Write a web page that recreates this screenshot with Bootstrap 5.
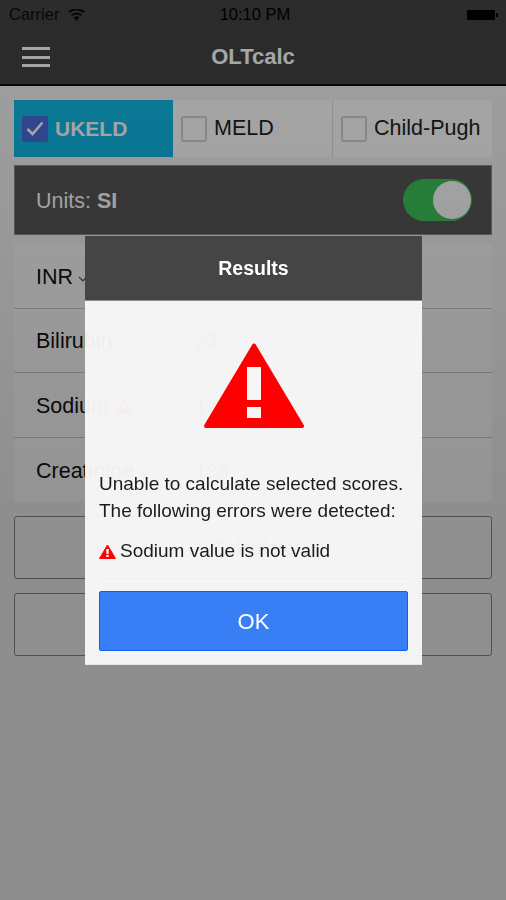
<!DOCTYPE html>
<html lang="en">
<head>
    <meta charset="UTF-8">
    <meta name="viewport" content="width=device-width, initial-scale=1.0">
    <title>OLTcalc</title>
    <link rel="stylesheet" href="https://cdn.jsdelivr.net/npm/bootstrap@5.3.0/dist/css/bootstrap.min.css">
    <style>
        html, body {
            height: 100%;
        }
        body {
            font-family: "Liberation Sans", Arial, sans-serif;
            background: #f4f4f4;
            color: #111;
            overflow: hidden;
        }
        .app-header {
            height: 86px;
            background: #434343;
            border-bottom: 2px solid #0c0c0c;
            color: #fff;
        }
        .status-line {
            height: 29px;
            padding: 0 9px 0 9px;
            color: #0c0c0c;
            font-size: 16.500px;
        }
        .status-gap {
            gap: 9px;
        }
        .status-time {
            margin-left: 2px;
            font-size: 16.500px;
            color: #000;
        }
        .battery {
            width: 28px;
            height: 10px;
            margin-right: 2px;
            background: #000;
            border-radius: 1px;
            position: relative;
        }
        .battery::after {
            content: "";
            position: absolute;
            left: 29px;
            top: 3px;
            width: 2px;
            height: 4px;
            background: #000;
        }
        .title-line {
            height: 55px;
            padding-top: 2px;
        }
        .burger {
            left: 22px;
            top: 18px;
            width: 28px;
        }
        .burger span {
            display: block;
            height: 3px;
            margin-bottom: 5.500px;
            background: #fff;
        }
        .app-title {
            font-size: 22px;
            font-weight: 700;
            color: #fff;
            margin: 0;
        }
        .app-main {
            padding: 14px 14px 0;
        }
        .score-tabs {
            height: 57px;
            background: #fff;
        }
        .score-tab {
            flex: 1 1 0;
            gap: 7px;
            padding-left: 8px;
            font-size: 21.500px;
            color: #222;
            border-right: 1px solid #e0e0e0;
        }
        .score-tab:last-child {
            border-right: 0;
        }
        .score-tab.on {
            background: #10b9e6;
            color: #fff;
            font-size: 21px;
            font-weight: 700;
            border-right: 0;
        }
        .tick-box {
            width: 26px;
            height: 26px;
            flex: none;
            border: 2px solid #d4d4d4;
            border-radius: 2px;
        }
        .on .tick-box {
            background: #4a6ee0;
            border-color: #4a6ee0;
        }
        .units-bar {
            height: 70px;
            margin-top: 8px;
            padding: 2px 19px 0 21px;
            background: #575757;
            color: #fff;
            font-size: 21.500px;
            border: 1px solid #8a8a8a;
        }
        .units-switch {
            width: 69px;
            height: 42px;
            margin-top: -2px;
            border-radius: 21px;
            background: #3fc65a;
            padding: 2px 1px;
        }
        .units-switch span {
            display: block;
            width: 38px;
            height: 38px;
            margin-left: auto;
            border-radius: 50%;
            background: #fff;
        }
        .lab-list {
            margin-top: 9px;
            background: #fbfbfb;
        }
        .lab-row {
            height: 64.500px;
            padding: 2px 0 0 22px;
            font-size: 21.500px;
            border-bottom: 1px solid #c8c8c8;
        }
        .lab-row:last-child {
            border-bottom: 0;
        }
        .lab-name {
            width: 159px;
            gap: 5px;
        }
        .lab-value {
            color: #555;
            font-size: 20px;
        }
        .wide-btn {
            height: 63px;
            margin-top: 14px;
            background: #f6f6f6;
            border: 1px solid #888;
            border-radius: 3px;
            font-size: 20px;
            color: #333;
        }
        .dim-layer {
            inset: 0;
            background: linear-gradient(rgba(0, 0, 0, .34), rgba(0, 0, 0, .42) 60%);
        }
        .results-box {
            left: 85px;
            top: 236px;
            width: 337px;
            height: 429px;
            background: rgba(248, 248, 248, .96);
            border-bottom: 1px solid #e4e4e4;
        }
        .results-head {
            height: 65px;
            padding-top: 2px;
            background: #454545;
            border-bottom: 1px solid #8c8c8c;
            color: #fff;
            font-size: 19.500px;
            font-weight: 700;
        }
        .results-body {
            padding: 42px 14px 0;
            font-size: 19px;
            color: #1c1c1c;
        }
        .results-text {
            line-height: 27px;
            margin: 42px 0 0;
        }
        .results-error {
            gap: 4px;
            margin-top: 16px;
            padding-bottom: 16px;
            line-height: 22px;
            border-bottom: 1px solid #efefef;
        }
        .btn-ok {
            width: 100%;
            height: 60px;
            margin-top: 12px;
            background: #387ef5;
            border: 1px solid #0c60ee;
            border-radius: 2px;
            color: #fff;
            font-size: 22px;
        }
    </style>
</head>
<body>
    <header class="app-header">
        <div class="status-line position-relative d-flex align-items-center justify-content-between">
            <div class="status-gap d-flex align-items-center">
                <span>Carrier</span>
                <svg width="17" height="12" viewBox="0 0 17 12" fill="#0c0c0c"><path d="M8.500 12 5.600 8.600a4.400 4.400 0 0 1 5.800 0zM4.300 7.100 3 5.600a8.300 8.300 0 0 1 11 0l-1.300 1.500a6.300 6.300 0 0 0-8.400 0zM1.600 4 .2 2.500a12.300 12.300 0 0 1 16.600 0L15.400 4a10.300 10.300 0 0 0-13.800 0z"/></svg>
            </div>
            <span class="status-time position-absolute start-50 translate-middle-x">10:10 PM</span>
            <div class="battery"></div>
        </div>
        <div class="title-line position-relative d-flex align-items-center justify-content-center">
            <div class="burger position-absolute"><span></span><span></span><span></span></div>
            <h1 class="app-title">OLTcalc</h1>
        </div>
    </header>

    <main class="app-main">
        <div class="score-tabs d-flex">
            <div class="score-tab on d-flex align-items-center">
                <span class="tick-box d-flex align-items-center justify-content-center">
                    <svg width="18" height="15" viewBox="0 0 18 15" fill="none" stroke="#fff" stroke-width="2.600"><path d="M1.500 8 6.500 13 16.500 1.500"/></svg>
                </span>
                UKELD
            </div>
            <div class="score-tab d-flex align-items-center"><span class="tick-box"></span>MELD</div>
            <div class="score-tab d-flex align-items-center"><span class="tick-box"></span>Child-Pugh</div>
        </div>

        <div class="units-bar d-flex align-items-center justify-content-between">
            <span>Units: <b>SI</b></span>
            <div class="units-switch"><span></span></div>
        </div>

        <div class="lab-list">
            <div class="lab-row d-flex align-items-center">
                <div class="lab-name d-flex align-items-center">INR
                    <svg width="14" height="12" viewBox="0 0 14 12" fill="none" stroke="#555" stroke-width="1.200"><path d="M1 6l4 4 8-9"/></svg>
                </div>
            </div>
            <div class="lab-row d-flex align-items-center">
                <div class="lab-name d-flex align-items-center">Bilirubin
                    <svg width="18" height="15" viewBox="0 0 18 15" fill="none" stroke="#555" stroke-width="1.200"><path d="M1 8l5 5L17 1"/></svg>
                </div>
                <span class="lab-value">23</span>
            </div>
            <div class="lab-row d-flex align-items-center">
                <div class="lab-name d-flex align-items-center">Sodium
                    <svg width="18" height="16" viewBox="0 0 18 16"><path fill="#f00" d="M9 0 18 16H0z"/><path fill="#fff" d="M8 5h2v6H8zM8 12h2v2H8z"/></svg>
                </div>
                <span class="lab-value">12</span>
            </div>
            <div class="lab-row d-flex align-items-center">
                <div class="lab-name d-flex align-items-center">Creatinine
                    <svg width="18" height="15" viewBox="0 0 18 15" fill="none" stroke="#555" stroke-width="1.200"><path d="M1 8l5 5L17 1"/></svg>
                </div>
                <span class="lab-value">123</span>
            </div>
        </div>

        <div class="wide-btn d-flex align-items-center justify-content-center">Calculate</div>
        <div class="wide-btn d-flex align-items-center justify-content-center">Reset</div>
    </main>

    <div class="dim-layer position-fixed"></div>

    <div class="results-box position-fixed">
        <div class="results-head d-flex align-items-center justify-content-center">Results</div>
        <div class="results-body">
            <div class="text-center">
                <svg class="d-block mx-auto" width="100" height="85" viewBox="0 0 100 85"><path fill="#f00" stroke="#f00" stroke-width="4" stroke-linejoin="round" d="M50 2.500 98 83H2z"/><path fill="#f7f7f7" d="M43 24h14v33H43zM43 64h14v11H43z"/></svg>
            </div>
            <p class="results-text">Unable to calculate selected scores.<br>The following errors were detected:</p>
            <div class="results-error d-flex align-items-center">
                <svg width="17" height="15" viewBox="0 0 17 15"><path fill="#f00" stroke="#f00" stroke-linejoin="round" d="M8.500 1 16.500 14.500H.5z"/><path fill="#f7f7f7" d="M7.300 5h2.400v5H7.300zM7.300 11h2.400v2H7.300z"/></svg>
                <span>Sodium value is not valid</span>
            </div>
            <button type="button" class="btn btn-ok">OK</button>
        </div>
    </div>

    <script src="https://cdn.jsdelivr.net/npm/bootstrap@5.3.0/dist/js/bootstrap.bundle.min.js"></script>
</body>
</html>
